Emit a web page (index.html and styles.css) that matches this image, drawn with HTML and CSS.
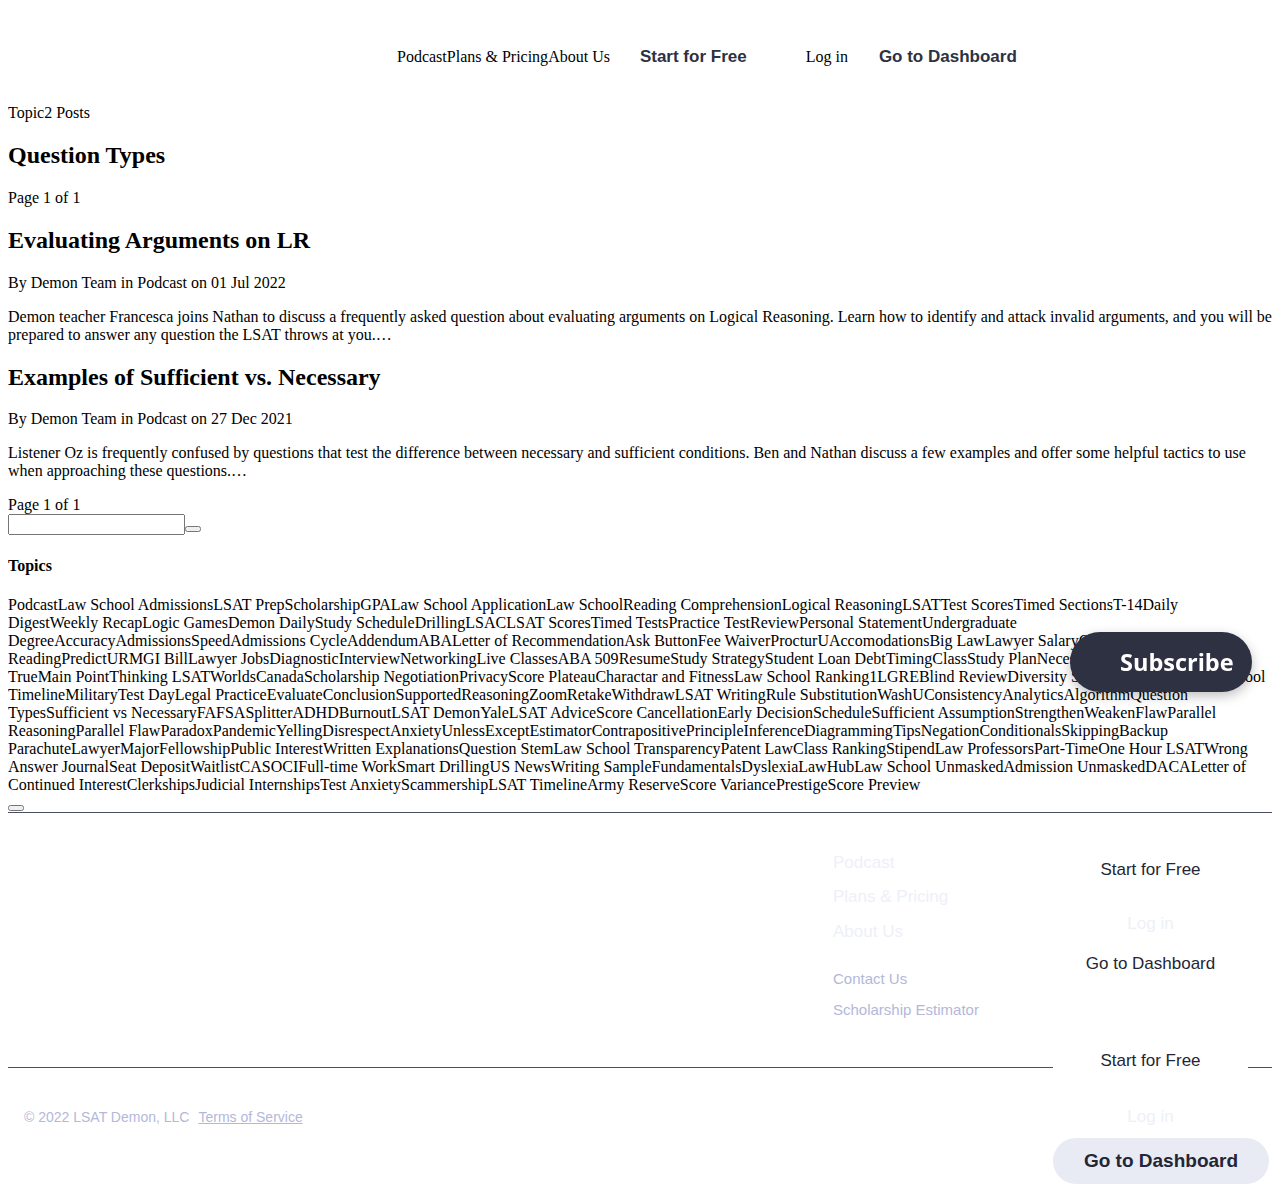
FILE: index.html
```html
<!DOCTYPE html>
<html lang="en">
<head>
<meta charset="utf-8">
<title>Question Types - LSAT Demon</title>
<link rel="stylesheet" href="styles.css">
</head>
<body>
<header class="site-header">
  <nav class="main-nav"><a class="nav-link" href="#">Podcast</a><a class="nav-link" href="#">Plans &amp; Pricing</a><a class="nav-link" href="#">About Us</a></nav>
  <a class="cta-bold cta-start" href="#">Start for Free</a>
  <a class="nav-link login" href="#">Log in</a>
  <a class="cta-bold cta-dash" href="#">Go to Dashboard</a>
</header>

<main class="content">
  <p>Topic2 Posts</p>
  <h2>Question Types</h2>
  <div>Page 1 of 1</div>

  <h2>Evaluating Arguments on LR</h2>
  <p>By Demon Team in Podcast on 01 Jul 2022</p>
  <p>Demon teacher Francesca joins Nathan to discuss a frequently asked question about evaluating arguments on Logical Reasoning. Learn how to identify and attack invalid arguments, and you will be prepared to answer any question the LSAT throws at you.…</p>

  <h2>Examples of Sufficient vs. Necessary</h2>
  <p>By Demon Team in Podcast on 27 Dec 2021</p>
  <p>Listener Oz is frequently confused by questions that test the difference between necessary and sufficient conditions. Ben and Nathan discuss a few examples and offer some helpful tactics to use when approaching these questions.…</p>

  <div>Page 1 of 1</div>
  <form class="search-form"><input type="text" class="search-input"><button type="button" class="search-btn"></button></form>

  <h4>Topics</h4>
  <div class="topics"><a href="#">Podcast</a><a href="#">Law School Admissions</a><a href="#">LSAT Prep</a><a href="#">Scholarship</a><a href="#">GPA</a><a href="#">Law School Application</a><a href="#">Law School</a><a href="#">Reading Comprehension</a><a href="#">Logical Reasoning</a><a href="#">LSAT</a><a href="#">Test Scores</a><a href="#">Timed Sections</a><a href="#">T-14</a><a href="#">Daily Digest</a><a href="#">Weekly Recap</a><a href="#">Logic Games</a><a href="#">Demon Daily</a><a href="#">Study Schedule</a><a href="#">Drilling</a><a href="#">LSAC</a><a href="#">LSAT Scores</a><a href="#">Timed Tests</a><a href="#">Practice Test</a><a href="#">Review</a><a href="#">Personal Statement</a><a href="#">Undergraduate Degree</a><a href="#">Accuracy</a><a href="#">Admissions</a><a href="#">Speed</a><a href="#">Admissions Cycle</a><a href="#">Addendum</a><a href="#">ABA</a><a href="#">Letter of Recommendation</a><a href="#">Ask Button</a><a href="#">Fee Waiver</a><a href="#">ProcturU</a><a href="#">Accomodations</a><a href="#">Big Law</a><a href="#">Lawyer Salary</a><a href="#">Critical Reading</a><a href="#">Predict</a><a href="#">URM</a><a href="#">GI Bill</a><a href="#">Lawyer Jobs</a><a href="#">Diagnostic</a><a href="#">Interview</a><a href="#">Networking</a><a href="#">Live Classes</a><a href="#">ABA 509</a><a href="#">Resume</a><a href="#">Study Strategy</a><a href="#">Student Loan Debt</a><a href="#">Timing</a><a href="#">Class</a><a href="#">Study Plan</a><a href="#">Necessary Assumption</a><a href="#">Must Be True</a><a href="#">Main Point</a><a href="#">Thinking LSAT</a><a href="#">Worlds</a><a href="#">Canada</a><a href="#">Scholarship Negotiation</a><a href="#">Privacy</a><a href="#">Score Plateau</a><a href="#">Charactar and Fitness</a><a href="#">Law School Ranking</a><a href="#">1L</a><a href="#">GRE</a><a href="#">Blind Review</a><a href="#">Diversity Statements</a><a href="#">Dream Law School Timeline</a><a href="#">Military</a><a href="#">Test Day</a><a href="#">Legal Practice</a><a href="#">Evaluate</a><a href="#">Conclusion</a><a href="#">Supported</a><a href="#">Reasoning</a><a href="#">Zoom</a><a href="#">Retake</a><a href="#">Withdraw</a><a href="#">LSAT Writing</a><a href="#">Rule Substitution</a><a href="#">WashU</a><a href="#">Consistency</a><a href="#">Analytics</a><a href="#">Algorithm</a><a href="#">Question Types</a><a href="#">Sufficient vs Necessary</a><a href="#">FAFSA</a><a href="#">Splitter</a><a href="#">ADHD</a><a href="#">Burnout</a><a href="#">LSAT Demon</a><a href="#">Yale</a><a href="#">LSAT Advice</a><a href="#">Score Cancellation</a><a href="#">Early Decision</a><a href="#">Schedule</a><a href="#">Sufficient Assumption</a><a href="#">Strengthen</a><a href="#">Weaken</a><a href="#">Flaw</a><a href="#">Parallel Reasoning</a><a href="#">Parallel Flaw</a><a href="#">Paradox</a><a href="#">Pandemic</a><a href="#">Yelling</a><a href="#">Disrespect</a><a href="#">Anxiety</a><a href="#">Unless</a><a href="#">Except</a><a href="#">Estimator</a><a href="#">Contrapositive</a><a href="#">Principle</a><a href="#">Inference</a><a href="#">Diagramming</a><a href="#">Tips</a><a href="#">Negation</a><a href="#">Conditionals</a><a href="#">Skipping</a><a href="#">Backup Parachute</a><a href="#">Lawyer</a><a href="#">Major</a><a href="#">Fellowship</a><a href="#">Public Interest</a><a href="#">Written Explanations</a><a href="#">Question Stem</a><a href="#">Law School Transparency</a><a href="#">Patent Law</a><a href="#">Class Ranking</a><a href="#">Stipend</a><a href="#">Law Professors</a><a href="#">Part-Time</a><a href="#">One Hour LSAT</a><a href="#">Wrong Answer Journal</a><a href="#">Seat Deposit</a><a href="#">Waitlist</a><a href="#">CAS</a><a href="#">OCI</a><a href="#">Full-time Work</a><a href="#">Smart Drilling</a><a href="#">US News</a><a href="#">Writing Sample</a><a href="#">Fundamentals</a><a href="#">Dyslexia</a><a href="#">LawHub</a><a href="#">Law School Unmasked</a><a href="#">Admission Unmasked</a><a href="#">DACA</a><a href="#">Letter of Continued Interest</a><a href="#">Clerkships</a><a href="#">Judicial Internships</a><a href="#">Test Anxiety</a><a href="#">Scammership</a><a href="#">LSAT Timeline</a><a href="#">Army Reserve</a><a href="#">Score Variance</a><a href="#">Prestige</a><a href="#">Score Preview</a></div>
  <div class="more-row"><button type="button" class="more-btn"></button></div>
</main>

<footer class="site-footer">
  <div class="footer-top">
    <nav class="footer-nav">
      <a class="fnav faint" href="#">Podcast</a>
      <a class="fnav faint" href="#">Plans &amp; Pricing</a>
      <a class="fnav faint" href="#">About Us</a>
      <a class="fnav small lav gap-top" href="#">Contact Us</a>
      <a class="fnav small lav" href="#">Scholarship Estimator</a>
    </nav>
    <div class="footer-actions">
      <a class="fact dark" href="#">Start for Free</a>
      <a class="fact faint login-f" href="#">Log in</a>
      <a class="fact dark" href="#">Go to Dashboard</a>
    </div>
  </div>
  <div class="footer-bottom">
    <span class="copy">© 2022 LSAT Demon, LLC</span><a class="terms" href="#">Terms of Service</a>
  </div>
</footer>

<a class="subscribe" href="#">Subscribe</a>

<div class="float-actions">
  <a class="fl-start" href="#">Start for Free</a>
  <a class="fl-login" href="#">Log in</a>
  <a class="fl-dash" href="#">Go to Dashboard</a>
</div>
</body>
</html>
```

FILE: styles.css
```css
body {
  margin: 8px;
  font-family: "Liberation Serif", "Times New Roman", serif;
  font-size: 16px;
  color: #000;
  background: #fff;
}

a {
  color: inherit;
  text-decoration: none;
}

.site-header {
  display: flex;
  align-items: center;
  height: 80px;
  box-sizing: border-box;
  padding-top: 17px;
  padding-left: 389px;
}

.main-nav {
  display: flex;
}

.nav-link {
  font-family: "Liberation Serif", "Times New Roman", serif;
  font-size: 16px;
  color: #000;
}

.cta-bold {
  font-family: "Liberation Sans", Arial, sans-serif;
  font-weight: 700;
  font-size: 17px;
  color: #2d3142;
}

.cta-start {
  margin-left: 30px;
}

.login {
  margin-left: 59px;
}

.cta-dash {
  margin-left: 31px;
}

.search-form {
  display: block;
}

.search-input {
  margin: 0;
  width: 177px;
  box-sizing: border-box;
}

.search-btn,
.more-btn {
  margin: 0;
}

.topics a {
  color: #000;
}

.more-row {
  height: 18px;
}

.site-footer {
  border-top: 1px solid #4b4f63;
  font-family: "Liberation Sans", Arial, sans-serif;
}

.footer-top {
  display: flex;
  align-items: flex-start;
  height: 254px;
  box-sizing: border-box;
  padding-top: 40px;
  padding-left: 825px;
}

.footer-nav {
  display: flex;
  flex-direction: column;
  width: 220px;
}

.fnav {
  display: block;
  font-size: 17px;
  line-height: 20px;
  margin-bottom: 14.5px;
}

.fnav.small {
  font-size: 15px;
  line-height: 18px;
  margin-bottom: 13px;
}

.fnav.gap-top {
  margin-top: 14px;
}

.faint {
  color: #eef0f8;
}

.lav {
  color: #b3b8da;
}

.footer-actions {
  display: flex;
  flex-direction: column;
  align-items: center;
  width: 195px;
  margin-top: 7px;
}

.fact {
  display: block;
  font-size: 17px;
  line-height: 20px;
}

.fact.dark {
  color: #232635;
}

.login-f {
  margin: 34px 0 20px;
}

.footer-bottom {
  border-top: 1px solid #4b4f63;
  padding: 41px 16px 50px;
  font-size: 14px;
  line-height: 16px;
  color: #b3b8da;
}

.terms {
  margin-left: 9px;
  text-decoration: underline;
  color: #b3b8da;
}

.subscribe {
  position: fixed;
  left: 1070px;
  top: 632px;
  width: 182px;
  height: 60px;
  box-sizing: border-box;
  padding-left: 50px;
  border-radius: 30px;
  background: #2d3142;
  color: #fff;
  font-family: "Open Sans", "Noto Sans", sans-serif;
  font-weight: 700;
  font-size: 23.5px;
  line-height: 60px;
  box-shadow: 0 4px 12px rgba(0, 0, 0, 0.25);
}

.float-actions {
  position: fixed;
  left: 1053px;
  top: 1049px;
  width: 195px;
  display: flex;
  flex-direction: column;
  align-items: center;
  background: #fff;
  padding-top: 2px;
  font-family: "Liberation Sans", Arial, sans-serif;
}

.fl-start {
  font-size: 17px;
  line-height: 20px;
  color: #232635;
}

.fl-login {
  font-size: 17px;
  line-height: 20px;
  margin-top: 36px;
  color: #eef0f8;
}

.fl-dash {
  align-self: flex-start;
  margin-top: 11px;
  width: 216px;
  height: 46px;
  box-sizing: border-box;
  border-radius: 23px;
  background: #e8ebf3;
  color: #232635;
  font-weight: 700;
  font-size: 19px;
  line-height: 46px;
  text-align: center;
}
```
